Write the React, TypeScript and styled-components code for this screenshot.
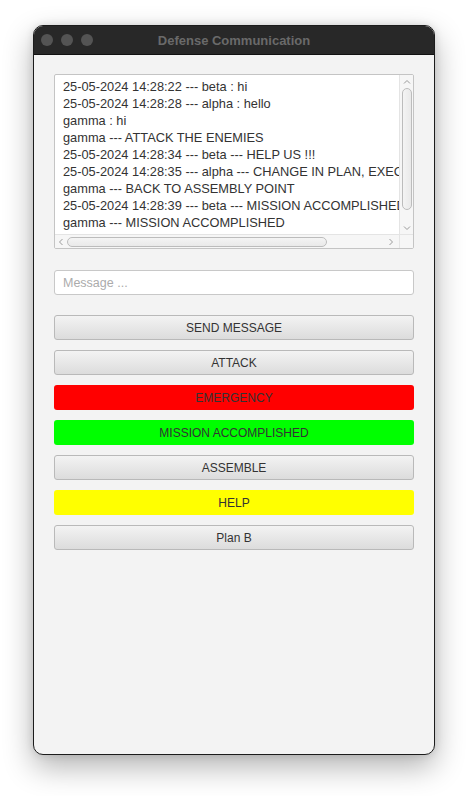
import React from "react";
import styled, { createGlobalStyle } from "styled-components";

const Global = createGlobalStyle`
  html, body { margin: 0; padding: 0; background: #ffffff; }
  body { font-family: "Liberation Sans", Arial, sans-serif; }
`;

const Page = styled.div`
  width: 468px;
  height: 796px;
  padding: 25px 0 0 33px;
  box-sizing: border-box;
`;

const Window = styled.div`
  width: 402px;
  height: 730px;
  border: 1px solid #1c1c1c;
  border-radius: 10px;
  overflow: hidden;
  background: #f3f3f3;
  box-sizing: border-box;
  display: flex;
  flex-direction: column;
  box-shadow: 0 12px 30px rgba(0, 0, 0, 0.3), 0 0 8px rgba(0, 0, 0, 0.12);
`;

const TitleBar = styled.div`
  height: 28px;
  background: #282828;
  border-bottom: 1px solid #111;
  position: relative;
  display: flex;
  align-items: center;
  justify-content: center;
  flex-shrink: 0;
`;

const Lights = styled.div`
  position: absolute;
  left: 7px;
  top: 8px;
  display: flex;
  gap: 8px;
`;

const Light = styled.span`
  width: 12px;
  height: 12px;
  border-radius: 50%;
  background: #545454;
`;

const Title = styled.div`
  color: #6a6a6a;
  font-weight: bold;
  font-size: 13px;
`;

const Content = styled.div`
  padding: 19px 20px 0 20px;
  display: flex;
  flex-direction: column;
`;

const LogBox = styled.div`
  height: 175px;
  border: 1px solid #c4c4c4;
  border-radius: 2px;
  background: #fff;
  display: grid;
  grid-template-columns: 1fr 14px;
  grid-template-rows: 1fr 14px;
  box-sizing: border-box;
  overflow: hidden;
`;

const LogText = styled.div`
  overflow: hidden;
  padding: 3px 0 0 8px;
  font-size: 12.8px;
  color: #333;
  line-height: 17px;
  white-space: nowrap;
`;

const VScroll = styled.div`
  background: #f6f6f6;
  border-left: 1px solid #e4e4e4;
  display: flex;
  flex-direction: column;
  align-items: center;
`;

const VThumb = styled.div`
  width: 8px;
  height: 120px;
  border: 1px solid #bcbcbc;
  border-radius: 5px;
  background: linear-gradient(to right, #f4f4f4, #e9e9e9);
`;

const HScroll = styled.div`
  background: #f6f6f6;
  border-top: 1px solid #e4e4e4;
  display: flex;
  align-items: center;
`;

const HThumb = styled.div`
  height: 8px;
  width: 258px;
  margin-left: 2px;
  border: 1px solid #bcbcbc;
  border-radius: 5px;
  background: linear-gradient(to bottom, #f4f4f4, #e9e9e9);
`;

const Spacer = styled.div`
  flex: 1;
`;

const Corner = styled.div`
  background: #f6f6f6;
  border-top: 1px solid #e4e4e4;
  border-left: 1px solid #e4e4e4;
`;

const Arrow = styled.svg<{ $m?: string }>`
  width: 8px;
  height: 8px;
  flex-shrink: 0;
  margin: ${(p) => p.$m ?? "0"};
`;

const Input = styled.input`
  margin-top: 21px;
  height: 25px;
  box-sizing: border-box;
  border: 1px solid #c8c8c8;
  border-radius: 3px;
  background: #fff;
  padding: 0 8px;
  font-family: "Liberation Sans", Arial, sans-serif;
  font-size: 12.5px;
  color: #333;
  outline: none;
  &::placeholder { color: #ababab; }
`;

const Buttons = styled.div`
  margin-top: 20px;
  display: flex;
  flex-direction: column;
  gap: 10px;
`;

const Btn = styled.button<{ $bg?: string }>`
  height: 25px;
  box-sizing: border-box;
  border-radius: 3px;
  border: ${(p) => (p.$bg ? "none" : "1px solid #b9b9b9")};
  background: ${(p) => p.$bg ?? "linear-gradient(to bottom, #f3f3f3, #dcdcdc)"};
  font-family: "Liberation Sans", Arial, sans-serif;
  font-size: 12px;
  color: #333;
  padding: 0;
`;

const lines = [
  "25-05-2024 14:28:22 --- beta : hi",
  "25-05-2024 14:28:28 --- alpha : hello",
  "gamma : hi",
  "gamma --- ATTACK THE ENEMIES",
  "25-05-2024 14:28:34 --- beta --- HELP US !!!",
  "25-05-2024 14:28:35 --- alpha --- CHANGE IN PLAN, EXECUTE PLAN B",
  "gamma --- BACK TO ASSEMBLY POINT",
  "25-05-2024 14:28:39 --- beta --- MISSION ACCOMPLISHED",
  "gamma --- MISSION ACCOMPLISHED",
];

const buttons: { label: string; bg?: string }[] = [
  { label: "SEND MESSAGE" },
  { label: "ATTACK" },
  { label: "EMERGENCY", bg: "#ff0000" },
  { label: "MISSION ACCOMPLISHED", bg: "#00ff00" },
  { label: "ASSEMBLE" },
  { label: "HELP", bg: "#ffff00" },
  { label: "Plan B" },
];

const chev = "#9a9a9a";

export default function App() {
  return (
    <>
      <Global />
      <Page>
        <Window>
          <TitleBar>
            <Lights>
              <Light />
              <Light />
              <Light />
            </Lights>
            <Title>Defense Communication</Title>
          </TitleBar>
          <Content>
            <LogBox>
              <LogText>
                {lines.map((l, i) => (
                  <div key={i}>{l}</div>
                ))}
              </LogText>
              <VScroll>
                <Arrow viewBox="0 0 8 8" $m="3px 0 2px">
                  <path d="M1 5.5 L4 2.5 L7 5.5" fill="none" stroke={chev} strokeWidth="1" />
                </Arrow>
                <VThumb />
                <Spacer />
                <Arrow viewBox="0 0 8 8" $m="0 0 2px">
                  <path d="M1 2.5 L4 5.5 L7 2.5" fill="none" stroke={chev} strokeWidth="1" />
                </Arrow>
              </VScroll>
              <HScroll>
                <Arrow viewBox="0 0 8 8" $m="0 0 0 2px">
                  <path d="M5.5 1 L2.5 4 L5.5 7" fill="none" stroke={chev} strokeWidth="1" />
                </Arrow>
                <HThumb />
                <Spacer />
                <Arrow viewBox="0 0 8 8" $m="0 4px 0 0">
                  <path d="M2.5 1 L5.5 4 L2.5 7" fill="none" stroke={chev} strokeWidth="1" />
                </Arrow>
              </HScroll>
              <Corner />
            </LogBox>
            <Input placeholder="Message ..." />
            <Buttons>
              {buttons.map((b) => (
                <Btn key={b.label} $bg={b.bg}>
                  {b.label}
                </Btn>
              ))}
            </Buttons>
          </Content>
        </Window>
      </Page>
    </>
  );
}
